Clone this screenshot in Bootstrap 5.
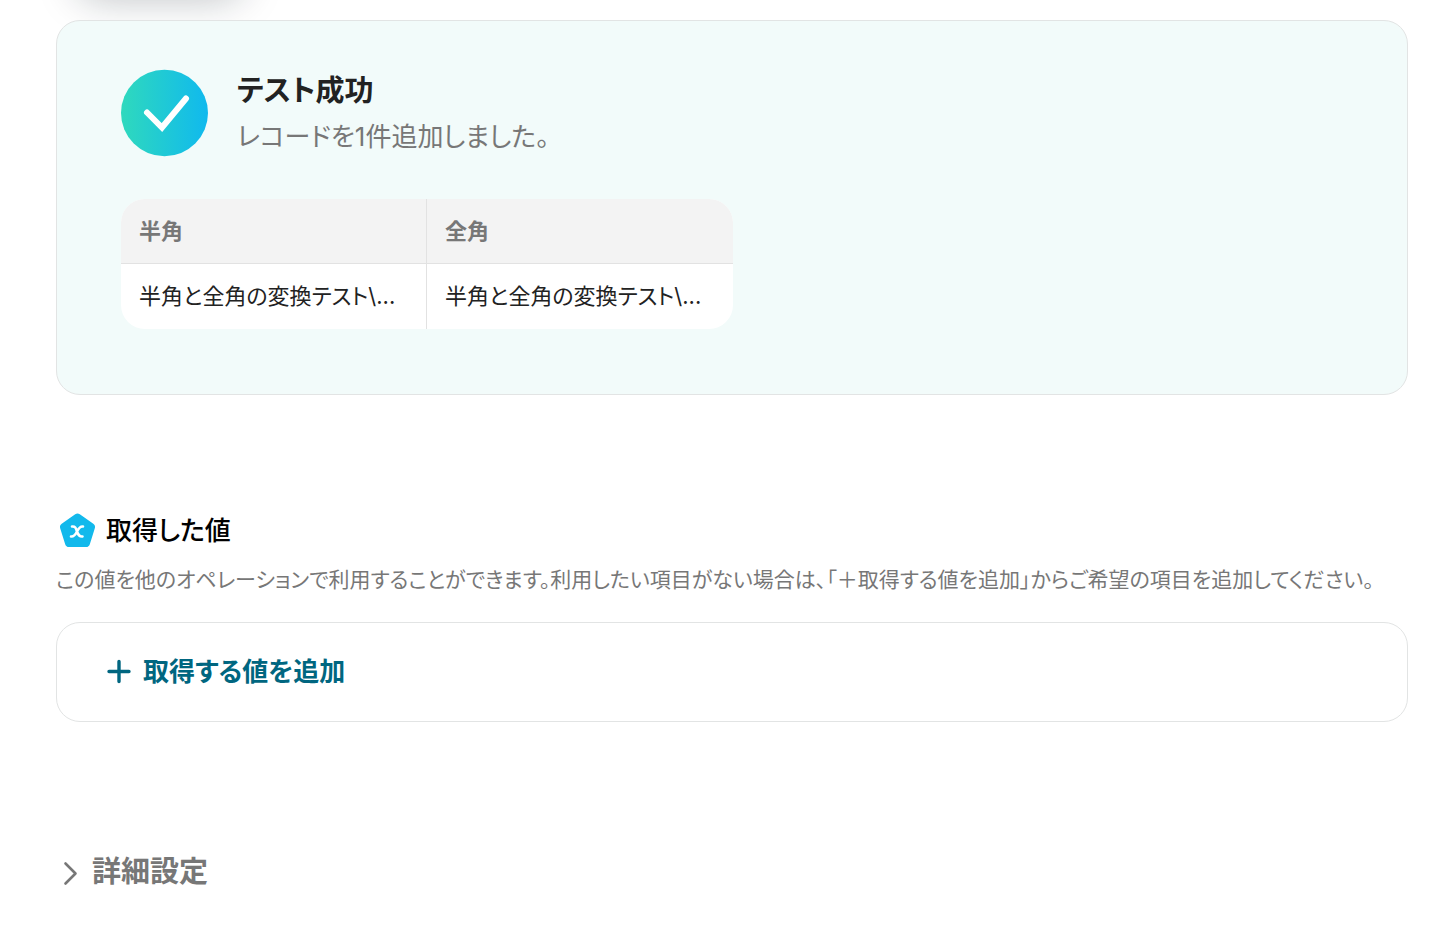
<!DOCTYPE html>
<html lang="ja">
<head>
<meta charset="utf-8">
<meta name="viewport" content="width=device-width, initial-scale=1">
<title>テスト成功</title>
<link href="https://cdn.jsdelivr.net/npm/bootstrap@5.3.0/dist/css/bootstrap.min.css" rel="stylesheet">
<style>
body{font-family:Inter,"Noto Sans CJK JP",sans-serif;font-feature-settings:"palt";color:#222;background:#fff;overflow-x:hidden}
.page{padding:20px 46px 52px 56px}
.float-shadow{top:-60px;left:76px;width:168px;height:48px;border-radius:24px;box-shadow:0 10px 40px rgba(10,25,35,.28)}
.panel{border:1px solid #e2e4e4;border-radius:24px;background:#fff}
.panel-success{background:#f2fbfa;padding:46px 64px 65px;margin-bottom:113px}
.result-head{gap:29px;margin-bottom:40px}
.result-title{font-size:29px;line-height:40px;font-weight:600;margin-bottom:4px}
.result-text{font-size:26px;line-height:44px;color:#777}
.table-box{max-width:612px;border-radius:24px;overflow:hidden;background:#fff}
.data{width:100%;table-layout:fixed;border-collapse:separate;border-spacing:0;font-size:22px;line-height:32px}
.data th,.data td{padding:16px 18px;width:50%;white-space:nowrap}
.data td{padding-bottom:17px}
.data th{background:#f3f3f3;color:#777;font-weight:600;border-bottom:1px solid #e2e2e2}
.data th:first-child,.data td:first-child{border-right:1px solid #e2e2e2}
.sec-title{font-size:26px;line-height:46px;font-weight:500;color:#000}
.sec-text{font-size:21px;line-height:32px;color:#777;margin:10px 0 26px}
.panel-add{padding:24px 48px;margin-bottom:124px}
.add-btn{font-size:26px;line-height:50px;font-weight:600;color:#006680;gap:10px}
.adv-btn{font-size:29px;line-height:52px;font-weight:600;color:#777;gap:12px}
.add-btn,.adv-btn{background:none;border:0;padding:0;font-feature-settings:inherit}
</style>
</head>
<body>
<div class="float-shadow position-absolute" aria-hidden="true"></div>
<main class="page position-relative">
  <section class="panel panel-success">
    <div class="result-head d-flex align-items-center">
      <svg class="flex-shrink-0" width="87" height="88" viewBox="0 0 87 88" aria-hidden="true">
        <defs><linearGradient id="ok" x1="0" x2="1" y1="0" y2="0"><stop stop-color="#2fd9bd"/><stop offset="1" stop-color="#10b9ee"/></linearGradient></defs>
        <ellipse cx="43.500" cy="44" rx="43.500" ry="43.200" fill="url(#ok)"/>
        <path d="M26 43.500 41 58.500 65 29.500" fill="none" stroke="#fff" stroke-width="6" stroke-linecap="round"/>
      </svg>
      <div class="pt-1">
        <h1 class="result-title">テスト成功</h1>
        <p class="result-text mb-0">レコードを1件追加しました。</p>
      </div>
    </div>
    <div class="table-box">
      <table class="data">
        <thead><tr><th scope="col">半角</th><th scope="col">全角</th></tr></thead>
        <tbody><tr><td>半角と全角の変換テスト\...</td><td>半角と全角の変換テスト\...</td></tr></tbody>
      </table>
    </div>
  </section>

  <section>
    <h2 class="sec-title d-flex align-items-center gap-2 mb-0">
      <svg width="42" height="44" viewBox="0 0 42 44" aria-hidden="true">
        <path d="M21.500 8.500 35 18 30 34H13L8 18Z" fill="#12b9ec" stroke="#12b9ec" stroke-width="8" stroke-linejoin="round"/>
        <path d="M16 17.500C19.500 17 20 19.500 21 22.500S23 28 26.500 27.500M27 17.500C24 17 22.500 19.500 21 22.500S18 28 15 27.500" fill="none" stroke="#fff" stroke-width="2.600" stroke-linecap="round"/>
      </svg>
      取得した値
    </h2>
    <p class="sec-text">この値を他のオペレーションで利用することができます。利用したい項目がない場合は、「＋取得する値を追加」からご希望の項目を追加してください。</p>
    <div class="panel panel-add">
      <button type="button" class="add-btn d-inline-flex align-items-center">
        <svg width="28" height="28" viewBox="0 0 28 28" fill="none" stroke="currentColor" stroke-width="3.400" stroke-linecap="round" aria-hidden="true"><path d="M4 13.500H24M14 3.500V23.500"/></svg>
        取得する値を追加
      </button>
    </div>
  </section>

  <button type="button" class="adv-btn d-inline-flex align-items-center" aria-expanded="false">
    <svg width="24" height="28" viewBox="0 0 24 28" fill="none" stroke="currentColor" stroke-width="2.600" stroke-linecap="round" stroke-linejoin="round" aria-hidden="true"><path d="M9.500 5.500 19.500 15.500 9.500 25.500"/></svg>
    詳細設定
  </button>
</main>
<script src="https://cdn.jsdelivr.net/npm/bootstrap@5.3.0/dist/js/bootstrap.bundle.min.js"></script>
</body>
</html>
